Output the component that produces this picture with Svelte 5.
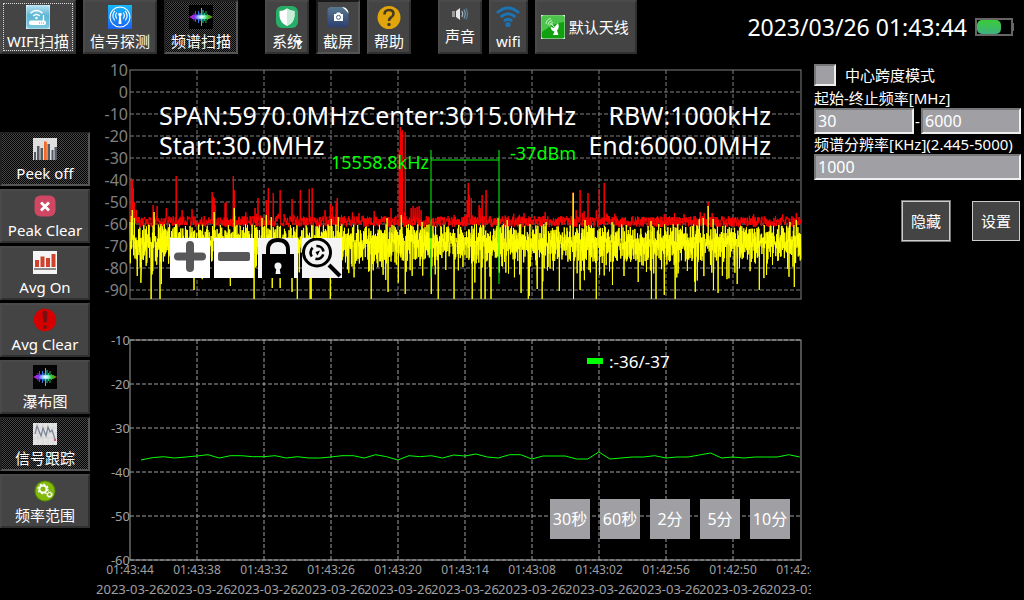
<script>
  const groups = [
    [
      { label: 'WIFI扫描', icon: 'router', focus: true },
      { label: '信号探测', icon: 'beacon' },
      { label: '频谱扫描', icon: 'wave', active: true }
    ],
    [
      { label: '系统', icon: 'shield', menu: true },
      { label: '截屏', icon: 'camera', sunken: true },
      { label: '帮助', icon: 'help' }
    ],
    [
      { label: '声音', icon: 'sound' },
      { label: 'wifi', icon: 'wifi' },
      { label: '默认天线', icon: 'antenna', row: true }
    ]
  ];

  const side = [
    { label: 'Peek off', icon: 'peaks', active: true },
    { label: 'Peak Clear', icon: 'clear' },
    { label: 'Avg On', icon: 'bars' },
    { label: 'Avg Clear', icon: 'alert' },
    { label: '瀑布图', icon: 'wave' },
    { label: '信号跟踪', icon: 'track', active: true },
    { label: '频率范围', icon: 'gears' }
  ];

  const ranges = ['30秒', '60秒', '2分', '5分', '10分'];

  const columns = Array.from({ length: 9 }, (_, i) => 197 + i * 67);
  const levels = Array.from({ length: 11 }, (_, i) => ({ text: 10 - i * 10, y: 70 + i * 22 }));
  const history = Array.from({ length: 6 }, (_, i) => ({ text: -10 - i * 10, y: 340 + i * 44 }));
  const times = ['01:43:44', '01:43:38', '01:43:32', '01:43:26', '01:43:20', '01:43:14', '01:43:08', '01:43:02', '01:42:56', '01:42:50', '01:42:44'];

  let seed = 20230326;
  function rand() {
    seed = (seed * 1664525 + 1013904223) % 4294967296;
    return seed / 4294967296;
  }

  const redPeaks = [
    [131, 178], [132, 180], [133, 188], [134, 202], [136, 210], [153, 205], [157, 206], [166, 208], [176, 176], [182, 210], [192, 209],
    [212, 192], [213, 196], [214, 198], [215, 205], [225, 203], [226, 202], [233, 176], [234, 190], [255, 208], [258, 198], [266, 200],
    [268, 188], [273, 193], [280, 190], [292, 199], [300, 190], [309, 189], [312, 188], [325, 210], [330, 204], [332, 206], [336, 202],
    [337, 198], [374, 211], [391, 208], [399, 150], [400, 127], [401, 132], [402, 130], [405, 132], [411, 208], [413, 206], [415, 208],
    [417, 207], [419, 206], [421, 210], [467, 200], [468, 183], [469, 195], [471, 198], [479, 205], [480, 208], [482, 195], [486, 190],
    [524, 213], [545, 212], [573, 192], [576, 210], [580, 190], [584, 211], [588, 193], [596, 210], [599, 189], [604, 183], [664, 214],
    [700, 212], [704, 213], [708, 202], [712, 213], [796, 213], [799, 218]
  ];
  const yellowPeaks = [
    [131, 216], [132, 210], [134, 218], [154, 212], [176, 224], [214, 212], [234, 208], [262, 218], [266, 215], [271, 217], [331, 219],
    [338, 217], [387, 218], [401, 215], [422, 222], [498, 218], [507, 220], [546, 222], [573, 193], [585, 220], [612, 222], [651, 221],
    [699, 219], [703, 218], [708, 206], [713, 219], [790, 222], [796, 220]
  ];
  const drops = [
    [137, 276], [141, 272], [151, 299], [160, 299], [194, 290], [230, 286], [254, 299], [272, 288], [280, 288], [292, 292], [297, 299],
    [310, 299], [311, 299], [330, 299], [371, 299], [388, 292], [405, 294], [431, 294], [438, 299], [454, 299], [472, 299], [481, 299],
    [485, 299], [491, 299], [521, 293], [528, 299], [529, 296], [537, 289], [542, 299], [559, 291], [573, 299], [580, 290], [596, 299],
    [612, 285], [638, 282], [651, 299], [656, 299], [664, 295], [675, 299], [695, 292], [713, 290], [718, 293], [737, 284], [759, 290],
    [794, 287]
  ];

  function trace(step, highs, lows, sample) {
    const up = new Map(highs);
    const down = new Map(lows);
    let d = 'M130 222';
    for (let x = 130; x < 801; x += step) {
      const whole = Math.floor(x);
      let y = sample();
      if (up.has(whole)) {
        y = up.get(whole);
        up.delete(whole);
      } else if (down.has(whole)) {
        y = down.get(whole);
        down.delete(whole);
      }
      d += `L${x.toFixed(2)} ${y.toFixed(1)}`;
    }
    return d;
  }

  const red = trace(0.33, redPeaks, [], () => 216 + rand() * 11 - (rand() > 0.96 ? 4 : 0));
  let flip = false;
  const yellow = trace(0.33, yellowPeaks, drops, () => {
    flip = !flip;
    if (flip) return 224 + rand() * 20;
    const r = rand();
    return 240 + rand() * 22 + (r > 0.72 ? rand() * 23 : 0);
  });

  const readings = [
    390, 383, 380, 384, 381, 378, 374, 384, 377, 377, 380, 380, 377, 384, 380, 384, 384, 381, 377, 377, 384, 374, 380, 390, 377, 380,
    377, 384, 375, 378, 372, 381, 384, 374, 374, 387, 378, 378, 378, 387, 387, 366, 387, 384, 381, 381, 377, 384, 381, 381, 375, 369,
    384, 381, 384, 381, 381, 381, 374, 381
  ];
  const tracking = readings.map((v, i) => `${(141 + (i * 67) / 6).toFixed(1)},${(330 + v / 3).toFixed(1)}`).join(' ');
</script>

{#snippet icon(name)}
  {#if name === 'router'}
    <svg class="icon" viewBox="0 0 24 24" aria-hidden="true">
      <defs><linearGradient id="sky" x1="0" y1="0" x2="0" y2="1"><stop offset="0" stop-color="#b4dff0" /><stop offset="0.45" stop-color="#5cb6d4" /><stop offset="1" stop-color="#7cc9df" /></linearGradient></defs>
      <rect width="24" height="24" fill="#d5eef6" /><rect x="0.5" y="0.5" width="23" height="23" rx="3" fill="url(#sky)" />
      <rect x="3" y="15.5" width="17" height="4.5" rx="2" fill="#fff" />
      <path d="M17.5 16V10" stroke="#fff" stroke-width="1.3" />
      <path d="M4.5 8.2Q10.5 2.8 16.5 8.2M7.2 11Q10.5 8 13.8 11" fill="none" stroke="#fff" stroke-width="1.6" />
      <circle cx="10.5" cy="13" r="1.3" fill="#fff" />
      <path d="M13 18h1M15 18h1M17 18h1" stroke="#4aa" stroke-width="1" />
    </svg>
  {:else if name === 'beacon'}
    <svg class="icon" viewBox="0 0 24 24" aria-hidden="true">
      <defs><linearGradient id="blue" x1="0" y1="0" x2="0" y2="1"><stop offset="0" stop-color="#16b8fa" /><stop offset="1" stop-color="#1c62f0" /></linearGradient></defs>
      <rect width="24" height="24" fill="url(#blue)" />
      <g fill="none" stroke="#fff" stroke-width="1.1"><circle cx="12" cy="12" r="10" />
        <path d="M6.8 5.8Q3 10.5 6.8 15.5M17.2 5.8Q21 10.5 17.2 15.5M8.8 7.5Q6.5 10.5 8.8 13.6M15.2 7.5Q17.5 10.5 15.2 13.6" /></g>
      <circle cx="12" cy="9.5" r="1.8" fill="#fff" /><path d="M11.3 10h1.4l.8 9h-3z" fill="#fff" />
    </svg>
  {:else if name === 'wave'}
    <svg class="icon" viewBox="0 0 24 24" aria-hidden="true">
      <defs><linearGradient id="rainbow" gradientUnits="userSpaceOnUse" x1="0" y1="0" x2="24" y2="0"><stop offset="0" stop-color="#d018b0" /><stop offset="0.25" stop-color="#7a38ff" /><stop offset="0.42" stop-color="#3090ff" /><stop offset="0.55" stop-color="#30e8e0" /><stop offset="0.75" stop-color="#18c830" /><stop offset="1" stop-color="#b07000" /></linearGradient>
      <radialGradient id="glow"><stop offset="0" stop-color="#fff" /><stop offset="1" stop-color="#fff" stop-opacity="0" /></radialGradient></defs>
      <rect width="24" height="24" fill="#030305" />
      <path fill="none" stroke="url(#rainbow)" stroke-width="0.9" d="M3.5 10v4M5 8v8M6.500 6v11M8 9v6M9.500 6v12M11 8v8M12.500 3v18M14 5v13M15.500 8v8M17 6v12M18.500 9v6M20 10v4" />
      <path fill="url(#rainbow)" d="M0 12L4 10H20L24 12L20 14H4z" />
      <ellipse cx="12.500" cy="12" rx="7" ry="3" fill="url(#glow)" />
    </svg>
  {:else if name === 'shield'}
    <svg class="icon" viewBox="0 0 24 24" aria-hidden="true">
      <rect x="1" y="1" width="22" height="22" rx="6" fill="#28ad68" />
      <path d="M12 3.5Q8 6 4.5 6V11Q5 18 12 21Q19 18 19.5 11V6Q16 6 12 3.5z" fill="#fff" />
      <path d="M12 3.5Q16 6 19.5 6V11Q19 18 12 21z" fill="#c9ecd8" />
    </svg>
  {:else if name === 'camera'}
    <svg class="icon" viewBox="0 0 24 24" aria-hidden="true">
      <defs><linearGradient id="slate" x1="0" y1="0" x2="0" y2="1"><stop offset="0" stop-color="#587890" /><stop offset="1" stop-color="#2c3f70" /></linearGradient></defs>
      <path d="M5 2H17L22.5 8V19Q22.5 22.5 19 22.5H5Q1.5 22.5 1.5 19V5.500Q1.5 2 5 2z" fill="url(#slate)" />
      <path d="M16 2Q22 2 22.5 8.5Q20.5 5.5 16 2z" fill="#fff" />
      <path d="M8 9H10L11 7.5H14L15 9H17V16H8z" fill="#fff" /><circle cx="12.5" cy="12.3" r="2" fill="none" stroke="#49658a" />
    </svg>
  {:else if name === 'help'}
    <svg class="icon" viewBox="0 0 24 24" aria-hidden="true">
      <circle cx="12" cy="12.5" r="11.5" fill="#e0a50a" />
      <path d="M7.5 9.5Q7.5 5 12 5Q16.5 5 16.5 8.8Q16.5 11 14 12.5Q12 13.5 12 16" fill="none" stroke="#463a20" stroke-width="2.6" /><circle cx="12" cy="19.5" r="1.7" fill="#463a20" />
    </svg>
  {:else if name === 'sound'}
    <svg class="icon" viewBox="0 0 24 19" aria-hidden="true">
      <path d="M4 6h3v6H4z" fill="#999" /><path d="M8 6l4-3v12l-4-3z" fill="#e8e8e8" />
      <g fill="none" stroke-width="1.3"><path d="M14 6q1.500 3 0 6" stroke="#a8b8c0" /><path d="M16 4.500q2.500 4.500 0 9" stroke="#7898a8" /><path d="M18 3.500q3 5.500 0 11" stroke="#587c94" /></g>
    </svg>
  {:else if name === 'wifi'}
    <svg class="icon" viewBox="0 0 24 24" aria-hidden="true">
      <g fill="none" stroke="#1b73b3" stroke-width="3"><path d="M1 8Q12-2 23 8" /><path d="M4.5 12Q12 5.5 19.5 12" /><path d="M8 16Q12 12.5 16 16" /></g>
      <circle cx="12" cy="19.5" r="2.6" fill="#1b73b3" />
    </svg>
  {:else if name === 'antenna'}
    <svg class="icon" viewBox="0 0 24 24" aria-hidden="true">
      <rect width="24" height="24" fill="#d8f4d8" /><rect x="0.5" y="0.5" width="23" height="23" rx="2" fill="#10a010" /><path d="M1 1H23V7Q12 8 1 17z" fill="#4cc44c" />
      <path d="M9.500 11.500L12.500 13L17 8Q19 13 16 15.500L17.500 20H12L13.500 16.500Q10 16 9.500 11.500z" fill="#fff" /><path d="M13 12L10.500 9" stroke="#fff" />
      <path d="M5 9Q5.500 4 10 3.500M6.800 9.800Q7.500 6 11 5.500M8.500 10.500Q9 8 12 7.500" fill="none" stroke="#e0ffe0" stroke-width="0.8" />
    </svg>
  {:else if name === 'peaks'}
    <svg class="icon" viewBox="0 0 24 24" aria-hidden="true">
      <rect y="1" width="24" height="22" fill="#dfdfdf" />
      <path d="M1 15h2v8H1zM4 9h2.500v14H4zM7.500 11H10v12H7.500zM14.500 7H17v16h-2.500zM18.500 13h2v10h-2zM21.500 10H24v13h-2.500z" fill="#555c66" /><path d="M11 4.500h2.800V23H11z" fill="#f26a24" />
    </svg>
  {:else if name === 'clear'}
    <svg class="icon" viewBox="0 0 24 24" aria-hidden="true">
      <rect x="1.5" y="1.5" width="21" height="21" rx="6" fill="#cf4763" /><path d="M8 8.500l8 8M16 8.500l-8 8" stroke="#fff" stroke-width="2.8" />
    </svg>
  {:else if name === 'bars'}
    <svg class="icon" viewBox="0 0 24 24" aria-hidden="true">
      <rect width="24" height="23" fill="#f5f5f5" /><path d="M2 9h4v7H2zM7.500 5.500h4V16h-4zM13 7h4v9h-4zM18.500 3h4v13h-4z" fill="#d0422c" /><path d="M1 18h22" stroke="#444" stroke-width="1.2" />
    </svg>
  {:else if name === 'alert'}
    <svg class="icon" viewBox="0 0 24 24" aria-hidden="true">
      <circle cx="12" cy="12" r="11.2" fill="#d60000" /><path d="M10 4q2-2 4 0l-.6 10h-2.800z" fill="#771010" stroke="#771010" /><circle cx="12" cy="19" r="2" fill="#771010" />
    </svg>
  {:else if name === 'track'}
    <svg class="icon" viewBox="0 0 24 24" aria-hidden="true">
      <rect y="1" width="24" height="22" fill="#e4e4e4" /><path d="M0 6h24M0 11h24M0 16h24M5 1v22M10 1v22M15 1v22M20 1v22" stroke="#cfcfcf" stroke-width="0.6" />
      <path d="M2 12L4 4 8 14 10 6 13 14 15 5 17 10 19 8 22 17" fill="none" stroke="#7c8494" stroke-width="1.2" /><rect x="21" y="17" width="2" height="2" fill="#e85060" />
    </svg>
  {:else if name === 'gears'}
    <svg class="icon" viewBox="0 0 24 24" aria-hidden="true">
      <circle cx="12" cy="12" r="10.5" fill="#4f8a00" /><circle cx="12" cy="12" r="9.5" fill="#83b90c" />
      <circle cx="10" cy="10" r="3.6" fill="none" stroke="#fff" stroke-width="2" /><circle cx="10" cy="10" r="5" fill="none" stroke="#fff" stroke-width="1.2" stroke-dasharray="2 1.9" />
      <circle cx="16.5" cy="15.5" r="2" fill="none" stroke="#fff" stroke-width="1.2" /><circle cx="16.5" cy="15.5" r="2.9" fill="none" stroke="#fff" stroke-width="0.8" stroke-dasharray="1.2 1.1" />
    </svg>
  {/if}
{/snippet}

<div class="page">
  <header class="top">
    <nav class="groups">
      {#each groups as group}
        <div class="group">
          {#each group as item}
            <button class="tool" class:active={item.active} class:sunken={item.sunken} class:row={item.row} class:focus={item.focus} type="button">
              {@render icon(item.icon)}
              <span>{item.label}</span>
              {#if item.menu}<i class="caret"></i>{/if}
            </button>
          {/each}
        </div>
      {/each}
    </nav>
    <div class="status">
      <time datetime="2023-03-26T01:43:44">2023/03/26 01:43:44</time>
      <svg class="battery" viewBox="0 0 39 18" role="img" aria-label="Battery">
        <defs><linearGradient id="charge" x1="0" y1="0" x2="0" y2="1"><stop offset="0" stop-color="#38cc38" /><stop offset="1" stop-color="#40b080" /></linearGradient></defs>
        <rect x="1" y="1" width="36" height="16" fill="none" stroke="#666" stroke-width="2" /><path d="M38 5v8" stroke="#666" stroke-width="2" />
        <rect x="2" y="2" width="24" height="14" rx="5" fill="url(#charge)" />
      </svg>
    </div>
  </header>

  <main class="body">
    <aside class="side">
      {#each side as item}
        <button class="tool" class:active={item.active} type="button">
          {@render icon(item.icon)}
          <span>{item.label}</span>
        </button>
      {/each}
    </aside>

    <div class="charts">
      <section class="chart">
        <svg class="plot" viewBox="90 54 721 256" role="img" aria-label="Spectrum">
          <g class="grid dim">
            {#each columns as x}<path d="M{x} 70V299" />{/each}
            {#each levels.slice(1) as level}<path d="M130 {level.y}H801" />{/each}
          </g>
          <rect class="frame dim" x="130" y="70" width="671" height="229" />
          <g class="levels">
            {#each levels as level}<text x="128" y={level.y + 6}>{level.text}</text>{/each}
          </g>
          <path class="trace" stroke="#f00" d={red} />
          <path class="trace" stroke="#ff0" d={yellow} />
          <path class="marker" d="M431 150V277M499 150V284M431 160H499" />
          <g class="marks">
            <text x="331" y="169">15558.8kHz</text>
            <text x="510" y="160">-37dBm</text>
          </g>
          <g class="readout">
            <text x="159" y="125">SPAN:5970.0MHz<tspan>Center:3015.0MHz</tspan></text>
            <text x="159" y="155">Start:30.0MHz</text>
            <text class="end" x="771" y="125">RBW:1000kHz</text>
            <text class="end" x="771" y="155">End:6000.0MHz</text>
          </g>
        </svg>
        <div class="zoomers">
          <button type="button" aria-label="Zoom in"><svg viewBox="0 0 40 40"><path d="M20 7V30M8 18.500H32" stroke="#58585a" stroke-width="8" stroke-linecap="round" /></svg></button>
          <button type="button" aria-label="Zoom out"><svg viewBox="0 0 40 40"><rect x="4" y="14" width="32" height="9" rx="2" fill="#58585a" /></svg></button>
          <button type="button" aria-label="Lock"><svg viewBox="0 0 40 40"><rect width="40" height="40" fill="#f4f4f4" /><path d="M10 17V12Q10 2 20 2Q30 2 30 12V17" fill="none" stroke="#000" stroke-width="4" /><path d="M4 16H36V40H4z" /><circle cx="20" cy="28" r="3.5" fill="#f4f4f4" /><path d="M18.500 29h3l1 7h-5z" fill="#f4f4f4" /></svg></button>
          <button type="button" aria-label="Find peak"><svg viewBox="0 0 40 40"><rect width="40" height="40" fill="#f4f4f4" /><circle cx="15" cy="14.5" r="13.5" fill="none" stroke="#000" stroke-width="3" /><circle cx="15" cy="14.5" r="6.5" fill="none" stroke="#000" stroke-width="2.6" stroke-dasharray="9.6 4" stroke-dashoffset="-2" /><path d="M13.500 14L18 12.500L15.500 17.500z" /><path d="M27 27L38 38" stroke="#000" stroke-width="4" /></svg></button>
        </div>
      </section>

      <section class="chart">
        <svg class="plot" viewBox="90 310 721 290" role="img" aria-label="Signal tracking">
          <g class="grid">
            {#each columns as x}<path d="M{x} 340V560" />{/each}
            {#each history as level}<path d="M130 {level.y}H801" />{/each}
          </g>
          <rect class="frame" x="130" y="340" width="671" height="220" />
          <g class="history">
            {#each history as level}<text x="130" y={level.y + 5}>{level.text}</text>{/each}
          </g>
          <g class="times">
            {#each times as time, i}<text x={130 + i * 67} y="574">{time}</text>{/each}
          </g>
          <g class="dates">
            {#each times as _, i}<text x={130 + i * 67} y="594">2023-03-26</text>{/each}
          </g>
          <polyline class="tracking" points={tracking} />
          <rect x="587" y="358" width="16" height="6" fill="#0f0" />
          <text class="legend" x="609" y="368">:-36/-37</text>
        </svg>
        <div class="ranges">
          {#each ranges as range}<button type="button">{range}</button>{/each}
        </div>
      </section>
    </div>

    <form class="panel">
      <label class="check"><input type="checkbox" /><span>中心跨度模式</span></label>
      <label class="line" for="start">起始-终止频率[MHz]</label>
      <div class="pair">
        <input id="start" type="text" value="30" />
        <span>-</span>
        <input id="stop" type="text" value="6000" aria-label="终止频率" />
      </div>
      <label class="line" for="rbw">频谱分辨率[KHz](2.445-5000)</label>
      <input id="rbw" type="text" value="1000" />
      <div class="actions">
        <button class="hide" type="button">隐藏</button>
        <button type="button">设置</button>
      </div>
    </form>
  </main>
</div>

<style>
  :global(body) {
    background: #000;
  }
  .page {
    color: #fff;
    font-family: 'Noto Sans', 'Noto Sans CJK SC', sans-serif;
    font-size: 15px;
    line-height: 20px;
  }
  .page * {
    box-sizing: border-box;
  }
  button,
  input {
    margin: 0;
    padding: 0;
    border: 0;
    border-radius: 0;
    color: inherit;
    font: inherit;
  }
  .top {
    display: flex;
    align-items: flex-start;
    justify-content: space-between;
    height: 54px;
  }
  .groups {
    display: flex;
    gap: 27px;
  }
  .group {
    display: flex;
    gap: 7px;
  }
  .tool {
    position: relative;
    display: flex;
    flex-direction: column;
    align-items: center;
    height: 54px;
    padding: 3px 5px 0;
    border: 2px solid;
    border-color: #4a4a4a #303030 #303030 #4a4a4a;
    background: #444;
    white-space: nowrap;
  }
  .tool span {
    line-height: 24px;
  }
  .tool.active {
    border-color: #222 #555 #555 #222;
    background: repeating-conic-gradient(#484848 0 25%, #000 0 50%) 0 0 / 2px 2px;
  }
  .tool.sunken {
    border-color: #1a1a1a #555 #555 #1a1a1a;
  }
  .tool.row {
    flex-direction: row;
    gap: 4px;
    padding: 0 6px 0 4px;
  }
  .tool.focus::after {
    content: '';
    position: absolute;
    inset: 1px;
    border: 1px dotted #ddd;
  }
  .caret {
    position: absolute;
    right: 4px;
    bottom: 6px;
    border: 4px solid transparent;
    border-top: 5px solid #fff;
    border-bottom: 0;
  }
  .icon {
    display: block;
    flex: none;
    width: 24px;
  }
  .status {
    display: flex;
    align-items: center;
    gap: 8px;
    height: 54px;
    padding-right: 10px;
    font-size: 23px;
  }
  .battery {
    width: 39px;
  }
  .body {
    display: grid;
    grid-template-columns: 90px minmax(0, 1fr) 213px;
  }
  .side {
    display: flex;
    flex-direction: column;
    gap: 3px;
    padding-top: 78px;
  }
  .chart {
    position: relative;
  }
  .plot {
    display: block;
    width: 100%;
  }
  .grid,
  .frame {
    fill: none;
    stroke: #a0a0a4;
  }
  .grid {
    stroke-dasharray: 4 2;
  }
  .grid.dim,
  .frame.dim {
    stroke: #808080;
  }
  .levels,
  .history {
    text-anchor: end;
  }
  .levels {
    fill: #808080;
    font-size: 16px;
  }
  .history,
  .times,
  .dates {
    fill: #a0a0a4;
    font-size: 13px;
  }
  .times,
  .dates {
    text-anchor: middle;
  }
  .times {
    font-size: 12px;
  }
  .trace {
    fill: none;
    stroke-width: 1;
    stroke-linejoin: bevel;
  }
  .marker {
    fill: none;
    stroke: #0f0;
  }
  .marks {
    fill: #0f0;
    font-size: 18px;
  }
  .readout {
    fill: #fff;
    font-size: 25px;
  }
  .end {
    text-anchor: end;
  }
  .tracking {
    fill: none;
    stroke: #0f0;
  }
  .legend {
    fill: #fff;
    font-size: 17px;
  }
  .zoomers,
  .ranges {
    position: absolute;
    display: flex;
  }
  .zoomers {
    left: 80px;
    bottom: 32px;
    gap: 4px;
  }
  .zoomers button,
  .ranges button {
    width: 40px;
    height: 40px;
  }
  .zoomers button {
    background: #fff;
  }
  .zoomers svg {
    display: block;
    width: 40px;
  }
  .ranges {
    right: 21px;
    bottom: 61px;
    gap: 10px;
    font-size: 16px;
  }
  .ranges button {
    background: #a0a0a4;
    white-space: nowrap;
  }
  .panel {
    display: flex;
    flex-direction: column;
    padding: 10px 3px 0;
  }
  .check {
    display: flex;
    align-items: center;
    gap: 9px;
    margin-bottom: 2px;
  }
  .panel input {
    appearance: none;
    min-width: 0;
    height: 26px;
    padding: 0 2px;
    border: 2px solid;
    border-color: #777 #eee #eee #777;
    background: #a0a0a4;
    font-size: 16px;
  }
  .panel .check input {
    width: 22px;
    height: 22px;
  }
  .line {
    white-space: nowrap;
  }
  .pair {
    display: grid;
    grid-template-columns: 1fr 7px 1fr;
    align-items: center;
    text-align: center;
  }
  .actions {
    display: flex;
    align-items: center;
    justify-content: flex-end;
    gap: 21px;
    margin-top: 20px;
    padding-right: 1px;
  }
  .actions button {
    width: 48px;
    height: 40px;
    border: 1px solid #ccc;
    background: #444;
  }
  .actions .hide {
    width: 50px;
    height: 42px;
    border-color: #777;
    box-shadow: inset 0 0 0 1px #ccc;
  }
</style>
